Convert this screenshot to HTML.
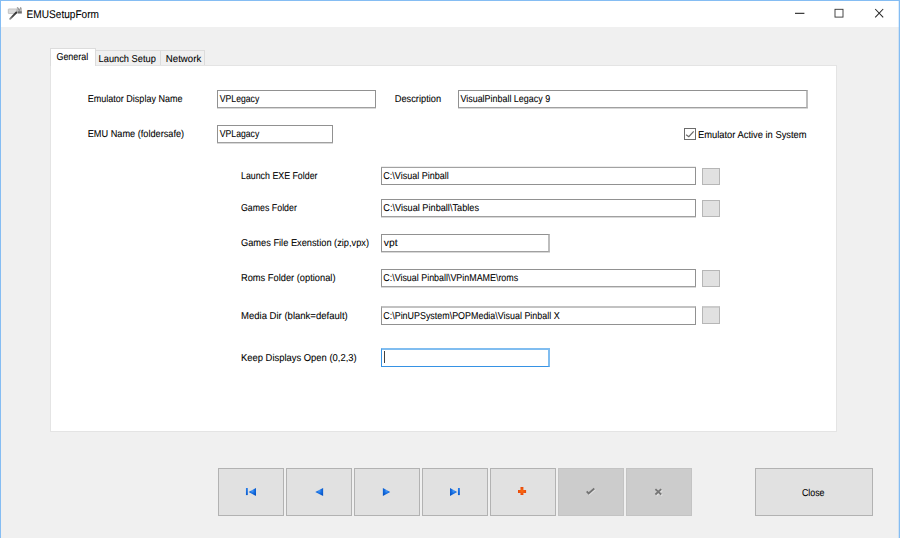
<!DOCTYPE html>
<html lang="en">
<head>
<meta charset="utf-8">
<title>EMUSetupForm</title>
<style>
html,body{margin:0;padding:0;}
body{width:900px;height:538px;overflow:hidden;background:#f0f0f0;position:relative;font-family:"Liberation Sans",sans-serif;color:#000;}
#win{position:absolute;left:0;top:0;width:900px;height:538px;background:#f0f0f0;overflow:hidden;}
#win div,#win span,#win svg{position:absolute;box-sizing:border-box;}
.bt{left:0;top:0;width:900px;height:1px;background:#85bdf3;}
.bl{left:0;top:0;width:1px;height:538px;background:#85bdf3;}
.br{left:899px;top:0;width:1px;height:538px;background:#85bdf3;}
.br2{left:898px;top:1px;width:1px;height:537px;background:rgba(133,189,243,0.28);}
.title{left:1px;top:1px;width:898px;height:26px;background:#fff;}
.pane{left:50px;top:65px;width:787px;height:367px;background:#fff;border:1px solid #e4e4e4;}
.tab{background:#f0f0f0;border:1px solid #dcdcdc;border-bottom:none;}
.tab.a{background:#fff;}
.in{background:#fff;border:1px solid #919191;height:18px;}
.in.sh{border-bottom-color:#a0a0a0;box-shadow:0 1px 0 #d8d8d8;}
.in.r2{border-right:2px solid #bdbdbd;}
.in.t1{border-top-color:#a2a2a2;box-shadow:0 -1px 0 #ededed;}
.in.t2{border-top:2px solid #c2c2c2;height:19px;}
.in.f{border-color:#3692e4;border-top:2px solid #80bdf0;border-right:2px solid #80bdf0;height:19px;}
.sb{background:#e1e1e1;border:1px solid #b6b6b6;width:18px;height:17px;left:702px;}
.nb{background:#e1e1e1;border:1px solid #b2b2b2;width:66px;height:48px;top:468px;}
.nb.d{background:#cccccc;border-color:#c3c3c3;}
.cb{left:684px;top:128px;width:12px;height:12px;background:#fff;border:1px solid #6c6c6c;}
.t{position:absolute;white-space:pre;-webkit-text-stroke:0.08px #000;text-rendering:geometricPrecision;line-height:14px;height:14px;transform-origin:0 0;font-family:'Liberation Sans',sans-serif}
</style>
</head>
<body>
<div id="win">
<div class="title"></div>
<div class="bt"></div><div class="bl"></div><div class="br"></div><div class="br2"></div>
<svg style="left:7px;top:6px" width="17" height="15" viewBox="0 0 17 15">
<defs><linearGradient id="gh" x1="1" y1="0" x2="0" y2="1"><stop offset="0" stop-color="#333"/><stop offset="0.6" stop-color="#4a4a4a"/><stop offset="1" stop-color="#8a8a8a"/></linearGradient></defs>
<rect x="1.3" y="2.95" width="8.2" height="4.6" rx="0.5" fill="#dbdbdb" stroke="#b4b4b4" stroke-width="0.7"/>
<path d="M9.6 1.7 L10.7 0.9 L12.3 4 L13.7 0.9 L14.9 2.2 L15 7.6 L9.4 7.6 Z" fill="#bcbcbc"/>
<path d="M10.7 1.3 L12.3 4.5 L13.7 1.3" stroke="#7c7c7c" stroke-width="0.8" fill="none"/>
<rect x="10.8" y="5.3" width="3.9" height="2.1" fill="#707070"/>
<path d="M9.3 6.5 L3.1 12.9" stroke="url(#gh)" stroke-width="1.8" stroke-linecap="round" fill="none"/>
</svg>
<svg style="left:790px;top:4px" width="100" height="20" viewBox="0 0 100 20">
<rect x="5" y="8.8" width="9.4" height="1" fill="#111"/>
<rect x="45" y="5.3" width="8" height="7.8" stroke="#333" stroke-width="0.9" fill="none"/>
<path d="M85.2 5 L93.2 13.3 M93.2 5 L85.2 13.3" stroke="#262626" stroke-width="1.05" fill="none"/>
</svg>
<div class="pane"></div>
<div class="tab" style="left:95px;top:50px;width:66px;height:15px"></div>
<div class="tab" style="left:160px;top:50px;width:45px;height:15px"></div>
<div class="tab a" style="left:50px;top:48px;width:46px;height:18px"></div>

<div class="in sh" style="left:217px;top:90px;width:159px"></div>
<div class="in sh r2" style="left:458px;top:90px;width:350px"></div>
<div class="in sh" style="left:217px;top:125px;width:116px"></div>
<div class="cb"></div>
<svg style="left:684px;top:128px" width="12" height="12" viewBox="0 0 12 12"><path d="M2.1 6.7 L4.8 8.7 L9.7 3.3" stroke="#6a6a6a" stroke-width="1.25" fill="none"/></svg>

<div class="in t1" style="left:381px;top:167px;width:315px"></div>
<div class="in sh" style="left:381px;top:199px;width:315px"></div>
<div class="in sh r2" style="left:381px;top:234px;width:169px"></div>
<div class="in sh" style="left:381px;top:269px;width:315px"></div>
<div class="in t2" style="left:381px;top:306px;width:315px"></div>
<div class="in f" style="left:381px;top:348px;width:169px"></div>
<div style="left:384px;top:351px;width:1px;height:12px;background:#404040"></div>

<div class="sb" style="top:168px"></div>
<div class="sb" style="top:200px"></div>
<div class="sb" style="top:270px"></div>
<div class="sb" style="top:306px;height:18px;border-top:2px solid #cbcbcb"></div>

<div class="nb" style="left:218px"></div>
<div class="nb" style="left:286px"></div>
<div class="nb" style="left:354px"></div>
<div class="nb" style="left:422px"></div>
<div class="nb" style="left:490px"></div>
<div class="nb d" style="left:558px"></div>
<div class="nb d" style="left:626px"></div>
<div class="nb" style="left:755px;width:118px"></div>

<svg style="left:218px;top:468px" width="474" height="48" viewBox="0 0 474 48">
<defs>
<radialGradient id="gb" cx="0.5" cy="0.38" r="0.62"><stop offset="0" stop-color="#4a9af6"/><stop offset="0.45" stop-color="#176fe2"/><stop offset="1" stop-color="#0654c4"/></radialGradient>
<linearGradient id="gk" x1="0" y1="0" x2="0" y2="1"><stop offset="0" stop-color="#2a7eea"/><stop offset="1" stop-color="#0a5ccf"/></linearGradient>
<radialGradient id="gp" cx="0.5" cy="0.5" r="0.6"><stop offset="0" stop-color="#fb6e12"/><stop offset="1" stop-color="#e4420a"/></radialGradient>
</defs>
<rect x="27.95" y="20" width="1.85" height="7.1" fill="url(#gk)"/>
<path d="M38 19.9 V27.9 L30.6 23.9 Z" fill="url(#gb)"/>
<path d="M105.1 19.9 V27.9 L97.3 24 Z" fill="url(#gb)"/>
<path d="M164.9 19.9 V27.9 L172.2 24 Z" fill="url(#gb)"/>
<path d="M232 19.9 V27.9 L239.1 24 Z" fill="url(#gb)"/>
<rect x="239.95" y="20" width="1.9" height="7.1" fill="url(#gk)"/>
<path d="M300 21.9 H302.5 V19.1 H305.4 V21.9 H308.1 V24.95 H305.4 V27 H302.5 V24.95 H300 Z" fill="url(#gp)"/>
<path d="M369.5 24.4 L371.4 26.3 L377.2 21.4" stroke="#e0e0e0" stroke-width="1.8" fill="none"/>
<path d="M368.7 23.4 L370.6 25.4 L376.3 20.5" stroke="#747474" stroke-width="1.8" fill="none"/>
<path d="M438.4 22.2 L444.2 27.5 M444.2 22.2 L438.4 27.5" stroke="#e0e0e0" stroke-width="1.8" fill="none"/>
<path d="M437.4 21.15 L443.2 26.5 M443.2 21.15 L437.4 26.5" stroke="#767676" stroke-width="1.8" fill="none"/>
</svg>
<span class="t" style="left:26px;top:7px;font-size:11.2px;transform:translate(0.57px,0.60px) scaleX(0.9032)">EMUSetupForm</span>
<span class="t" style="left:56px;top:51px;font-size:10.0px;transform:translate(0.42px,0.10px) scaleX(0.8947)">General</span>
<span class="t" style="left:98px;top:53px;font-size:10.0px;transform:translate(0.62px,0.10px) scaleX(0.9261)">Launch Setup</span>
<span class="t" style="left:165px;top:53px;font-size:10.0px;transform:translate(0.84px,0.10px) scaleX(0.9643)">Network</span>
<label class="t" style="left:87px;top:93px;font-size:10.0px;transform:translate(0.73px,0.10px) scaleX(0.9021)">Emulator Display Name</label>
<label class="t" style="left:87px;top:128px;font-size:10.0px;transform:translate(0.73px,0.10px) scaleX(0.9179)">EMU Name (foldersafe)</label>
<label class="t" style="left:394px;top:93px;font-size:10.0px;transform:translate(0.75px,0.10px) scaleX(0.9259)">Description</label>
<span class="t" style="left:219px;top:93px;font-size:10.0px;transform:translate(0.76px,0.10px) scaleX(0.8666)">VPLegacy</span>
<span class="t" style="left:219px;top:128px;font-size:10.0px;transform:translate(0.76px,0.10px) scaleX(0.8666)">VPLagacy</span>
<span class="t" style="left:460px;top:93px;font-size:10.0px;transform:translate(0.43px,0.10px) scaleX(0.8928)">VisualPinball Legacy 9</span>
<label class="t" style="left:697px;top:128px;font-size:10.0px;transform:translate(0.97px,0.90px) scaleX(0.9352)">Emulator Active in System</label>
<label class="t" style="left:241px;top:170px;font-size:10.0px;transform:translate(0.00px,0.10px) scaleX(0.8820)">Launch EXE Folder</label>
<label class="t" style="left:241px;top:202px;font-size:10.0px;transform:translate(0.00px,0.20px) scaleX(0.8816)">Games Folder</label>
<label class="t" style="left:241px;top:237px;font-size:10.0px;transform:translate(0.00px,0.10px) scaleX(0.9255)">Games File Exenstion (zip,vpx)</label>
<label class="t" style="left:241px;top:272px;font-size:10.0px;transform:translate(0.00px,0.10px) scaleX(0.9289)">Roms Folder (optional)</label>
<label class="t" style="left:241px;top:310px;font-size:10.0px;transform:translate(0.00px,0.10px) scaleX(0.9528)">Media Dir (blank=default)</label>
<label class="t" style="left:241px;top:352px;font-size:10.0px;transform:translate(0.00px,0.10px) scaleX(0.9414)">Keep Displays Open (0,2,3)</label>
<span class="t" style="left:383px;top:170px;font-size:10.0px;transform:translate(0.28px,0.10px) scaleX(0.9019)">C:\Visual Pinball</span>
<span class="t" style="left:383px;top:202px;font-size:10.0px;transform:translate(0.28px,0.20px) scaleX(0.9173)">C:\Visual Pinball\Tables</span>
<span class="t" style="left:383px;top:237px;font-size:10.0px;transform:translate(0.78px,0.10px) scaleX(1.0292)">vpt</span>
<span class="t" style="left:383px;top:272px;font-size:10.0px;transform:translate(0.28px,0.10px) scaleX(0.8902)">C:\Visual Pinball\VPinMAME\roms</span>
<span class="t" style="left:383px;top:310px;font-size:10.0px;transform:translate(0.28px,0.10px) scaleX(0.8919)">C:\PinUPSystem\POPMedia\Visual Pinball X</span>
<span class="t" style="left:801px;top:486px;font-size:10.0px;transform:translate(0.88px,0.80px) scaleX(0.8866)">Close</span>
</div>

</body>
</html>
